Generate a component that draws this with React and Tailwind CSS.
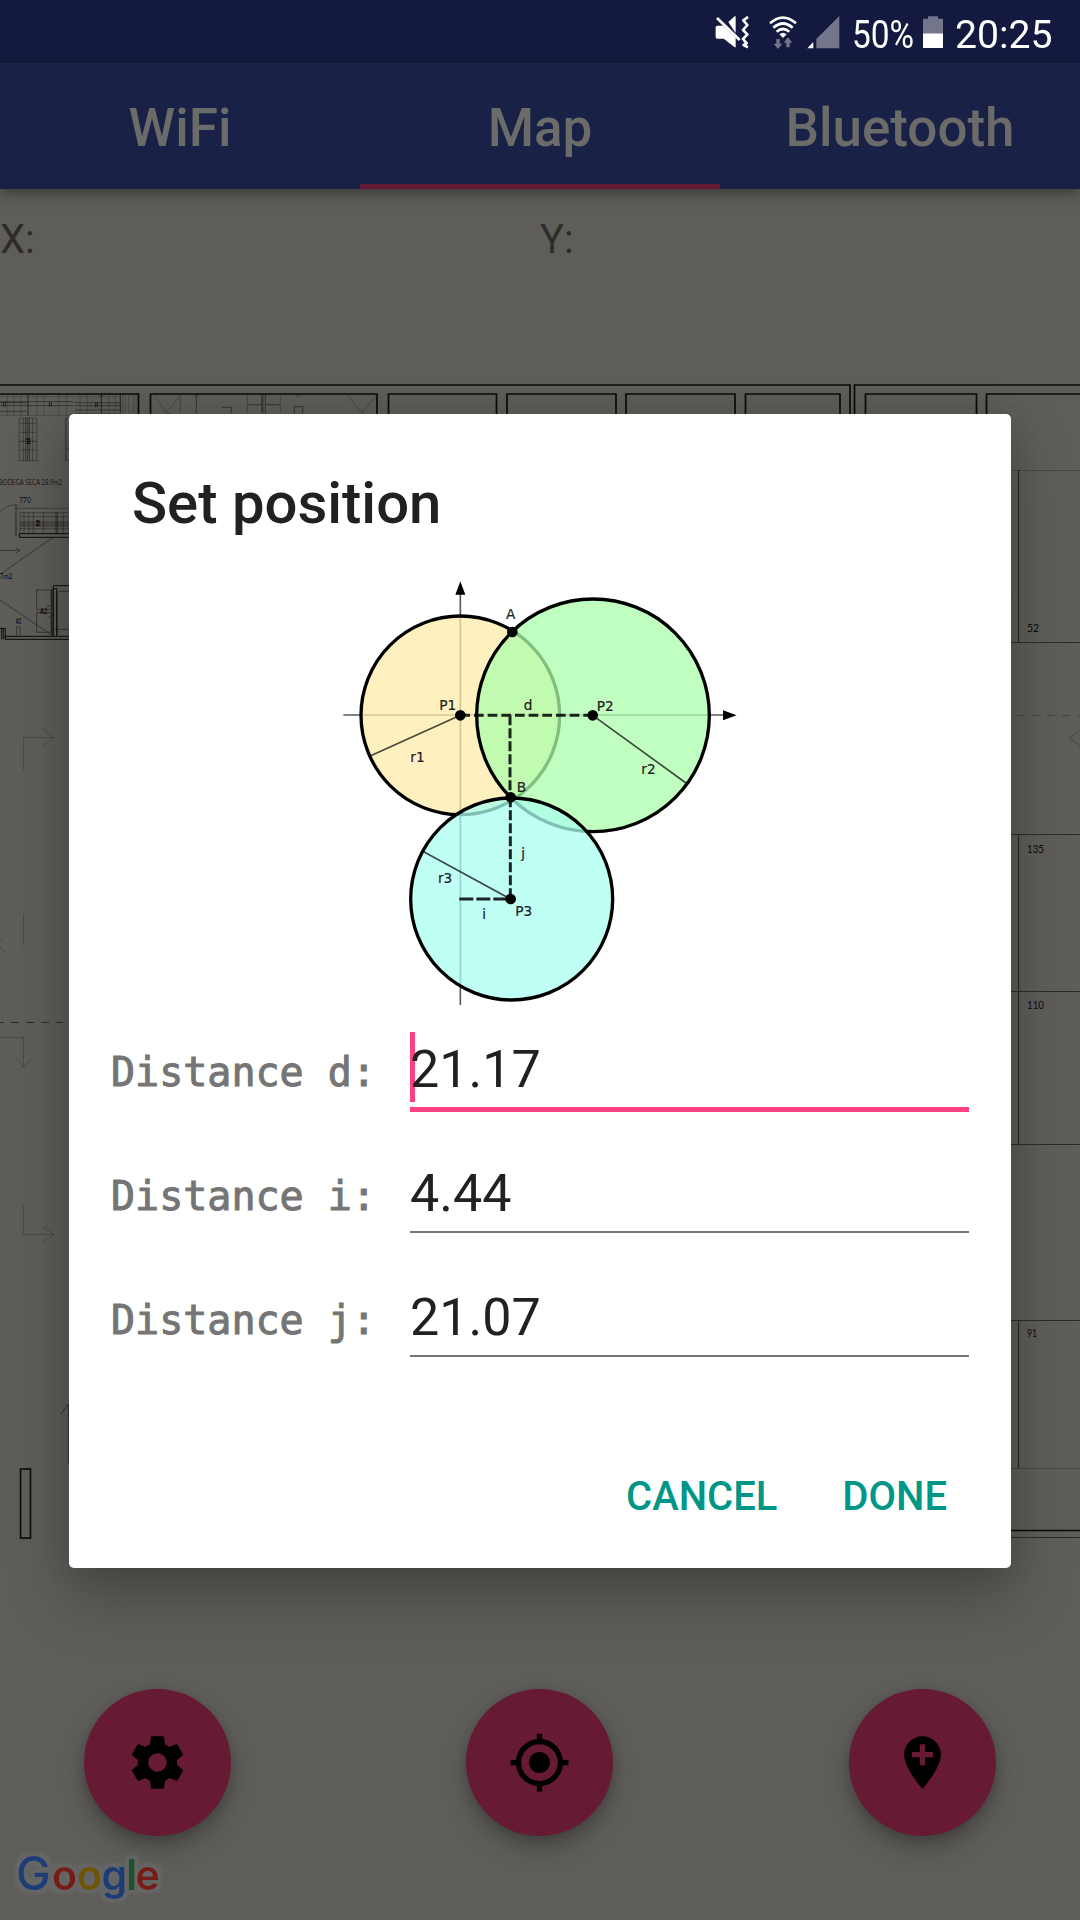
const TABS = ["WiFi", "Map", "Bluetooth"];

const FIELDS = [
  { label: "Distance d:", value: "21.17", focused: true },
  { label: "Distance i:", value: "4.44", focused: false },
  { label: "Distance j:", value: "21.07", focused: false },
];

function MutedIcon() {
  return (
    <svg className="h-[33px] w-[35px]" viewBox="0 0 105 99" fill="none">
      <path d="M7 29h17l38 36v29h-3L26 68H7q-5 0-5-5V34q0-5 5-5zM40 18l19-17h3v50z" fill="#fff" />
      <path d="M6 6L74 72" stroke="#fff" strokeWidth="8" />
      <path d="M99 3L85 13L97 27L84 42L97 55L84 69L95 82L86 87L99 94" stroke="#fff" strokeWidth="8" strokeLinejoin="round" />
    </svg>
  );
}

function WifiIcon() {
  return (
    <svg className="h-[34px] w-[28px]" viewBox="0 0 84 102" fill="none">
      <g stroke="#fff" strokeWidth="8">
        <path d="M3 22Q42 -12 81 22" />
        <path d="M13 35Q42 10 71 35" />
        <path d="M23 47Q42 31 61 47" />
      </g>
      <path d="M31 55Q42 46 53 55L42 66z" fill="#fff" />
      <path d="M22 69h10v14h8L27 99 14 83h8zM52 94h10V80h8L57 64 44 80h8z" fill="#72758b" />
    </svg>
  );
}

function SignalIcon() {
  return (
    <svg className="h-[33px] w-[33px]" viewBox="0 0 99 99">
      <path d="M97 0v97H28V69z" fill="#72758b" />
      <path d="M19 78v19H1z" fill="#fff" />
    </svg>
  );
}

function BatteryIcon() {
  return (
    <svg className="h-[33px] w-[20px]" viewBox="0 0 60 99">
      <path d="M15 1h30v7h15v44H0V8h15z" fill="#72758b" />
      <path d="M0 52h60v44H0z" fill="#fff" />
    </svg>
  );
}

function StatusBar() {
  return (
    <header className="flex h-[63px] shrink-0 items-center bg-[#141a3f] pt-[2px] pl-[715px] text-[38px] leading-none text-white">
      <MutedIcon />
      <div className="ml-[19px]"><WifiIcon /></div>
      <div className="ml-[10px]"><SignalIcon /></div>
      <div className="ml-[12px] w-[62px] whitespace-nowrap">
        <span className="inline-block origin-left scale-x-[0.88] pt-[5px]">50%</span>
      </div>
      <div className="ml-[9px]"><BatteryIcon /></div>
      <span className="ml-[12px] inline-block origin-left scale-x-[1.03] pt-[5px]">20:25</span>
    </header>
  );
}

function TabBar() {
  return (
    <nav className="relative z-10 grid h-[126px] shrink-0 grid-cols-3 bg-[#1a2147] text-[53px] font-medium text-[#6b6b6a] shadow-[0_4px_14px_rgba(0,0,0,0.4)]">
      {TABS.map((t) => (
        <div key={t} className={t === "Map" ? "flex items-center justify-center border-b-[5px] border-[#661a33] pt-[10px]" : "flex items-center justify-center pt-[5px]"}>
          {t}
        </div>
      ))}
    </nav>
  );
}

/* Darkened floor plan; coordinates are screen pixels. */
function FloorPlan() {
  return (
    <svg className="absolute inset-0 h-full w-full" viewBox="0 280 1080 1640" fill="none" stroke="#0b0b0a">
      {/* outer walls and rooms along the top */}
      <g strokeWidth="1.7">
        <path d="M0 385H850V416M1080 385H854.500V416" />
        <path d="M0 394H138.500V416M150.500 416V394H377V416M388.500 416V394H496.500V416M507 416V394H616V416M626 416V394H735V416M745.500 416V394H840V416M865.500 416V394H976.500V416M986.500 416V394H1080" />
      </g>

      {/* furniture and annotations of the top left rooms */}
      <g transform="translate(0 370) scale(0.33333)" strokeWidth="2">
        <path d="M0 95H220M0 98H80M224 98H360M0 107H220M224 107H360M224 120H360M0 124H80M224 132H360" opacity=".7" />
        <path d="M0 80H360M0 136H207M22 74V136M42 74V136M62 74V136M110 74V136M132 74V136M176 74V136M200 74V136M240 74V130M262 74V130M326 74V130M346 74V130M368 74V130M376 74V130M386 74V130M400 74V130M408 74V130" opacity=".3" />
        <path d="M84 74V136M304 74V130M361 74V130M10 96V110M16 96V110M148 96V110M154 96V110M287 96V112M292 96V112" strokeWidth="3" opacity=".7" />
        <path d="M297 80l7-7 7 7M582 80l7-7 7 7M589 74V130M888 80l7-7 7 7M666 112H694V130M883 130V110H908V130M741 104H785M796 104H841M785 74V130M789 74V130M796 74V130" opacity=".75" />
        <path d="M467 78L497 128 540 78M1044 78L1086 128 1128 78M541 74V130M742 74V130M841 74V130M497 126l12 6M1086 126l12 6" opacity=".4" />
        <path d="M58 144H110V272H58zM58 160H110M58 187H110M58 240H110M70 144V272M98 144V272M196 144H207M196 144V272H207M196 238H207M200 144V272" opacity=".5" />
        <path d="M58 214H110M77 144V272M83 144V272M88 144V272" opacity=".75" />
        <path d="M46 404H50V496H46zM0 428Q18 405 46 404M51 415H207M60 428H207M60 428V490M60 440H207M60 476H207M72 428V490M86 428V490M100 428V490M130 428V490M190 428V490" opacity=".55" />
        <path d="M60 456H207M60 462H207M60 468H207M168 428V490M172 428V490" opacity=".75" />
        <path d="M207 491H58V502H207" strokeWidth="3" />
        <path d="M0 541H58M48 533l12 8-12 9M158 503L0 613M0 690L158 797M110 660H153V719H110zM110 728H153V787H110zM142 712q0-6 8-6M142 742q6 0 10-2M207 664H178q-6 0-6 8V796M165 778H207M50 770V797M60 770V797M50 770H60" opacity=".7" />
        <path d="M207 647H160V797M170 655V797M160 656H170M156 656V797M207 799H16V808H207M0 775H16V808M5 775V808M10 775V808" strokeWidth="3" />
        <g fill="#0b0b0a" stroke="none" fontFamily="Lato, sans-serif" fontSize="22">
          <text x="-4" y="344" textLength="190" lengthAdjust="spacingAndGlyphs" fillOpacity=".85">BODEGA SECA 28.9m2</text>
          <text x="58" y="400" textLength="34" lengthAdjust="spacingAndGlyphs">770</text>
          <text x="76" y="221" fontWeight="700" textLength="17">12</text>
          <text x="105" y="468" fontWeight="700" textLength="16">12</text>
          <text x="-1" y="628" textLength="38" lengthAdjust="spacingAndGlyphs">7m2</text>
          <text x="120" y="731" fontWeight="700" textLength="22" lengthAdjust="spacingAndGlyphs">A2</text>
          <text x="47" y="763" fontWeight="700" textLength="17" lengthAdjust="spacingAndGlyphs">A1</text>
        </g>
      </g>

      {/* direction arrows on the left side */}
      <g strokeWidth="1" opacity=".22">
        <path d="M23.500 770V737.500H54M43 729l11 8.500-11 8.500M23.500 914V945M4 937L-2 944l6 8M0 1037.500H23.500V1068M16.500 1058l7 10 7.500-10M23.500 1205V1234.500H54M43 1227l11 7.500-11 7.500" />
      </g>
      <path d="M0 1022.500H4M11 1022.500h8M26 1022.500h8M41 1022.500h8M56 1022.500h7" strokeWidth="1.2" opacity=".6" />
      <path d="M68.500 1464V1404L61 1414" strokeWidth="1" opacity=".5" />
      <rect x="20.500" y="1469" width="10" height="69" strokeWidth="1.6" />
      <path d="M0 1538.500H68" strokeWidth="1" opacity=".05" />

      {/* shelves on the right side */}
      <g strokeWidth="1.2" opacity=".6">
        <path d="M1011 642.500H1080M1018.500 470V642M1011 834.500H1080M1018.500 834V1144M1011 991.500H1080M1011 1144.500H1080M1011 1320.500H1080M1018.500 1320V1468" />
      </g>
      <path d="M1011 470.500H1080M1011 1468.500H1080M1080 730l-10.500 8 10.500 8" opacity=".25" />
      <path d="M1011 595.500H1080" strokeDasharray="1 6" opacity=".2" />
      <path d="M1017 715.500H1080" strokeDasharray="8 7" strokeWidth="1.2" opacity=".3" />
      <path d="M1011 1530.500H1080" strokeWidth="1.6" />
      <path d="M1011 1537.500H1080" opacity=".6" />
      <g fill="#0b0b0a" stroke="none" fontFamily="Lato, sans-serif" fontSize="12">
        <text x="1027" y="632" textLength="12" lengthAdjust="spacingAndGlyphs">52</text>
        <text x="1027" y="852.500" textLength="17" lengthAdjust="spacingAndGlyphs">135</text>
        <text x="1027" y="1009" textLength="17" lengthAdjust="spacingAndGlyphs">110</text>
        <text x="1027" y="1337" textLength="10" lengthAdjust="spacingAndGlyphs">91</text>
      </g>
    </svg>
  );
}

function Fab({ children }) {
  return (
    <button className="flex size-[147px] items-center justify-center rounded-full bg-[#661a33] shadow-[0_12px_22px_rgba(0,0,0,0.25),0_2px_8px_rgba(0,0,0,0.12)]">
      <svg className="size-[63px]" viewBox="0 0 24 24" fill="#000">{children}</svg>
    </button>
  );
}

function GoogleLogo() {
  return (
    <svg className="absolute bottom-0 left-0 h-[80px] w-[180px]" viewBox="0 0 180 80">
      <defs>
        <filter id="halo" x="-10%" y="-30%" width="120%" height="160%">
          <feMorphology in="SourceAlpha" operator="dilate" radius="4" result="grown" />
          <feGaussianBlur in="grown" stdDeviation="1" result="soft" />
          <feFlood floodColor="#656565" />
          <feComposite in2="soft" operator="in" result="glow" />
          <feMerge>
            <feMergeNode in="glow" />
            <feMergeNode in="SourceGraphic" />
          </feMerge>
        </filter>
      </defs>
      <g filter="url(#halo)">
        <text y="49.500" fontFamily="Inter, sans-serif" fontWeight="500" fontSize="41">
          <tspan x="16" fontSize="46.500" fill="#1d3d76">G</tspan>
          <tspan x="52" fontWeight="600" fill="#741f19">o</tspan>
          <tspan x="77" fontWeight="600" fill="#705400">o</tspan>
          <tspan x="101.500" fontWeight="600" fill="#1d3d76">g</tspan>
          <tspan x="126" fontSize="43" fontWeight="600" fill="#1a5229">l</tspan>
          <tspan x="135.500" fontWeight="600" fill="#741f19">e</tspan>
        </text>
      </g>
    </svg>
  );
}

/* Three circles meeting in point B, with their distances d, i and j. */
function TrilaterationDiagram() {
  return (
    <svg className="mx-auto h-[450px] w-[440px]" viewBox="0 0 1320 1350" fill="none">
      <g stroke="#000" strokeWidth="5" opacity=".65">
        <path d="M70 465H1215M421 1335V90" />
      </g>
      <path d="M421 64l15 40h-30zM1250 466l-41 15v-30z" fill="#000" />
      <circle cx="421" cy="466" r="298" fill="#ffebaa" fillOpacity=".75" stroke="#000" strokeWidth="10" />
      <circle cx="819" cy="466" r="349" fill="#abffab" fillOpacity=".75" stroke="#000" strokeWidth="10" />
      <circle cx="575" cy="1017" r="303" fill="#abffef" fillOpacity=".75" stroke="#000" strokeWidth="10" />
      <g stroke="#000" strokeWidth="5" opacity=".7">
        <path d="M421 466L152 587M818 466L1098 669M571 1017L311 875" />
      </g>
      <g stroke="#000" strokeWidth="9" opacity=".85">
        <path d="M421 466H818" strokeDasharray="29 12" />
        <path d="M570 466V712M571 712V1017" strokeDasharray="30 9" />
        <path d="M418 1017H571" strokeDasharray="42 9" />
      </g>
      <g fill="#000">
        <circle cx="421" cy="466" r="16" />
        <circle cx="818" cy="466" r="16" />
        <circle cx="577" cy="216" r="16" />
        <circle cx="572" cy="712" r="16" />
        <circle cx="572" cy="1017" r="16" />
      </g>
      <g fill="#222" stroke="#222" strokeWidth="0.6" fontFamily="DejaVu Sans, sans-serif" fontSize="41">
        <text x="558" y="178">A</text>
        <text x="358" y="449">P1</text>
        <text x="611" y="450">d</text>
        <text x="830" y="453">P2</text>
        <text x="271" y="606">r1</text>
        <text x="964" y="642">r2</text>
        <text x="590" y="696">B</text>
        <text x="604" y="894">j</text>
        <text x="354" y="968">r3</text>
        <text x="487" y="1077">i</text>
        <text x="586" y="1067">P3</text>
      </g>
    </svg>
  );
}

function Field({ label, value, focused }) {
  return (
    <div className="flex h-[124px] items-start pr-[42px] pl-[42px]">
      <label className="w-[299px] pt-[10px] font-['DejaVu_Sans_Mono',monospace] text-[40px] leading-[60px] whitespace-pre text-[#757575] [-webkit-text-stroke:1px_#757575]">{label}</label>
      <div className={focused ? "relative h-[80px] flex-1 border-b-[5px] border-[#ff4081]" : "relative h-[77px] flex-1 border-b-2 border-[#757575]"}>
        {focused && <span className="absolute top-0 left-0 h-[70px] w-[5px] bg-[#ff4081]" />}
        <span className="relative block pt-[8px] text-[52px] leading-[60px] text-[#212121]">{value}</span>
      </div>
    </div>
  );
}

function PositionDialog() {
  return (
    <div className="absolute inset-0 z-20 flex items-start pt-[414px] pl-[69px]">
      <section role="dialog" className="flex h-[1154px] w-[942px] flex-col rounded-[5px] bg-white shadow-[0_28px_60px_rgba(0,0,0,0.25),0_0_30px_rgba(0,0,0,0.1)]">
        <h1 className="h-[146px] pt-[56px] pl-[63px] text-[58px] leading-[66px] font-medium text-[#212121]">Set position</h1>
        <TrilaterationDiagram />
        <div className="pt-[22px]">
          {FIELDS.map((f) => <Field key={f.label} {...f} />)}
        </div>
        <footer className="mt-auto flex justify-end gap-[65px] pr-[64px] pb-[47px] text-[40px] leading-[48px] font-medium text-[#009688]">
          <button>CANCEL</button>
          <button>DONE</button>
        </footer>
      </section>
    </div>
  );
}

export default function App() {
  return (
    <div className="relative flex h-[1920px] w-[1080px] flex-col overflow-hidden bg-[#5f5d59] font-[Roboto,sans-serif]">
      <StatusBar />
      <TabBar />
      <div className="grid h-[91px] shrink-0 grid-cols-2 pt-[28px] text-[40px] leading-[46px] text-[#2d2c2a]">
        <span>X:</span>
        <span>Y:</span>
      </div>
      <main className="relative flex flex-1 flex-col justify-end">
        <FloorPlan />
        <GoogleLogo />
        <div className="relative flex gap-[235px] pb-[84px] pl-[84px]">
          <Fab>
            <path d="M19.43 12.98c.04-.32.07-.64.07-.98s-.03-.66-.07-.98l2.11-1.65c.19-.15.24-.42.12-.64l-2-3.46c-.12-.22-.39-.3-.61-.22l-2.490 1c-.52-.4-1.080-.73-1.690-.98l-.38-2.650C14.460 2.180 14.250 2 14 2h-4c-.25 0-.46.18-.49.42l-.38 2.650c-.61.25-1.170.59-1.690.98l-2.490-1c-.23-.09-.49 0-.61.22l-2 3.460c-.13.22-.07.49.12.64l2.110 1.650c-.04.32-.07.65-.07.98s.03.66.07.98l-2.110 1.650c-.19.15-.24.42-.12.64l2 3.460c.12.22.39.3.61.22l2.490-1c.52.4 1.080.73 1.690.98l.38 2.650c.03.24.24.42.49.42h4c.25 0 .46-.18.49-.42l.38-2.650c.61-.25 1.170-.59 1.690-.98l2.490 1c.23.09.49 0 .61-.22l2-3.460c.12-.22.07-.49-.12-.64l-2.110-1.650zM12 15.500c-1.930 0-3.500-1.570-3.500-3.500s1.570-3.500 3.500-3.500 3.500 1.570 3.500 3.500-1.570 3.500-3.500 3.500z" />
          </Fab>
          <Fab>
            <path d="M12 8c-2.210 0-4 1.790-4 4s1.790 4 4 4 4-1.790 4-4-1.790-4-4-4zm8.940 3c-.46-4.170-3.770-7.480-7.940-7.940V1h-2v2.060C6.830 3.520 3.520 6.830 3.060 11H1v2h2.060c.46 4.170 3.770 7.480 7.940 7.940V23h2v-2.060c4.170-.46 7.480-3.770 7.940-7.940H23v-2h-2.060zM12 19c-3.870 0-7-3.130-7-7s3.130-7 7-7 7 3.130 7 7-3.130 7-7 7z" />
          </Fab>
          <div className="ml-px">
            <Fab>
              <path d="M12 2C8.140 2 5 5.140 5 9c0 5.250 7 13 7 13s7-7.750 7-13c0-3.860-3.140-7-7-7zm4 8h-3v3h-2v-3H8V8h3V5h2v3h3v2z" />
            </Fab>
          </div>
        </div>
      </main>
      <PositionDialog />
    </div>
  );
}
